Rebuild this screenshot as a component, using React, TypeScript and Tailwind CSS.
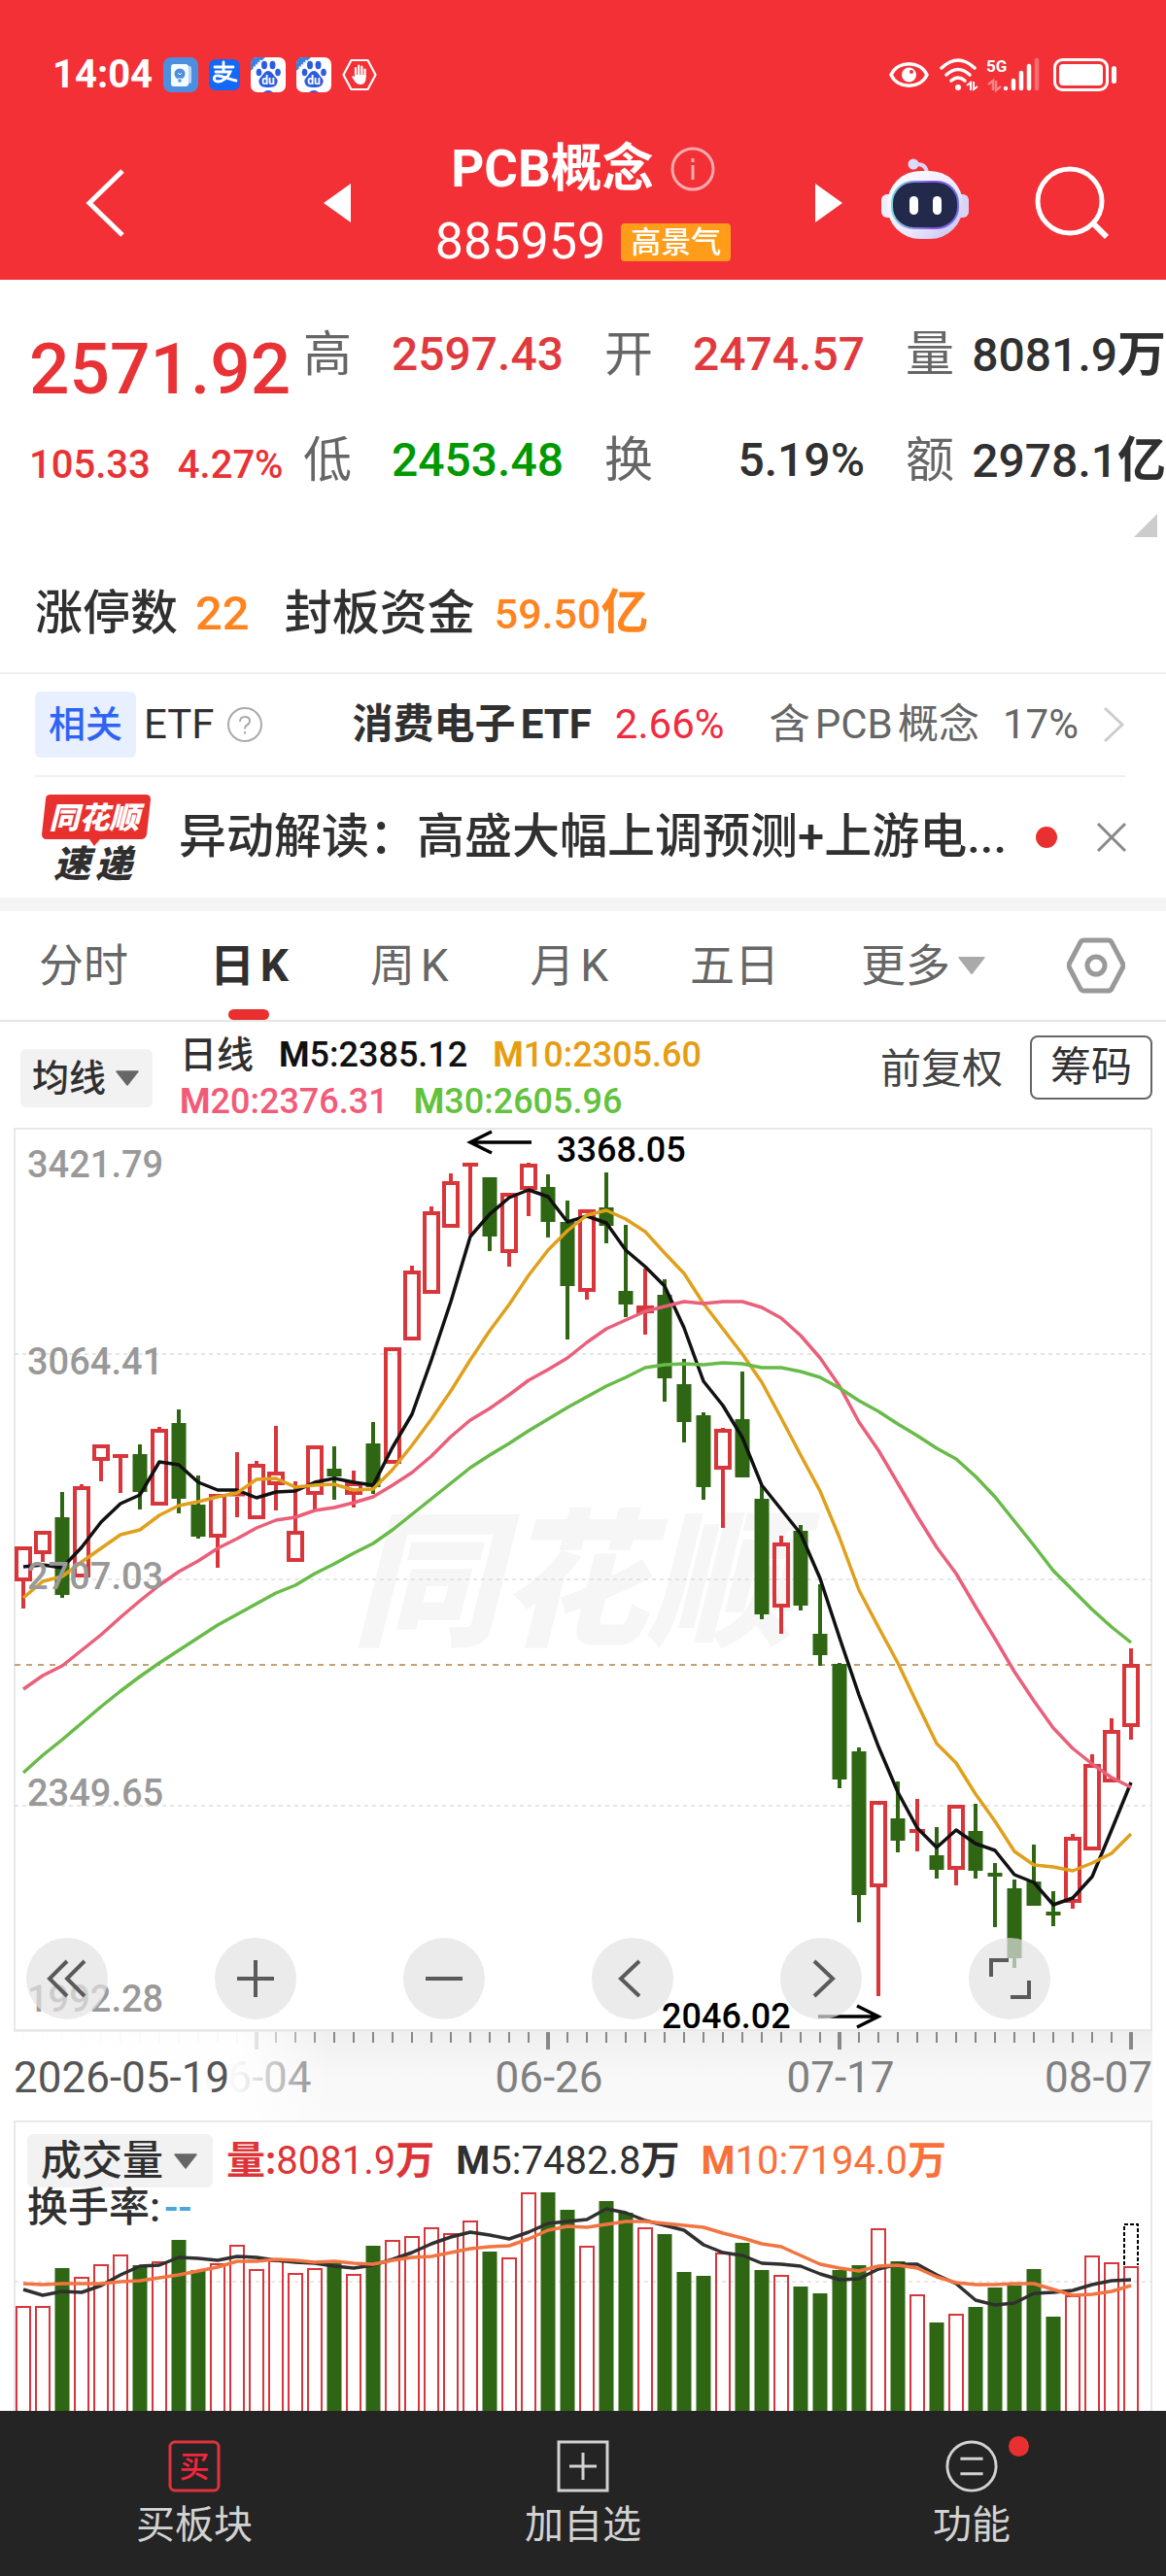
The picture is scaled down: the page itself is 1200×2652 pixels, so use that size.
import React from "react";

// [direction, high, body top, body bottom, low] in chart units
type Candle = ["r" | "g", number, number, number, number];

const candles: Candle[] = [
  ["r", 1592, 1592, 1628, 1656],
  ["r", 1576, 1576, 1600, 1608],
  ["g", 1536, 1562, 1642, 1645],
  ["r", 1528, 1530, 1624, 1624],
  ["r", 1487, 1487, 1504, 1525],
  ["r", 1497, 1497, 1501, 1537],
  ["g", 1487, 1497, 1536, 1554],
  ["r", 1469, 1471, 1550, 1550],
  ["g", 1451, 1465, 1543, 1558],
  ["g", 1519, 1549, 1582, 1584],
  ["r", 1538, 1538, 1583, 1614],
  ["r", 1495, 1536, 1541, 1562],
  ["r", 1504, 1507, 1564, 1564],
  ["r", 1468, 1515, 1529, 1555],
  ["r", 1525, 1576, 1608, 1608],
  ["r", 1488, 1488, 1539, 1554],
  ["g", 1489, 1512, 1520, 1544],
  ["r", 1514, 1526, 1539, 1552],
  ["g", 1464, 1486, 1531, 1538],
  ["r", 1387, 1387, 1507, 1507],
  ["r", 1303, 1308, 1380, 1380],
  ["r", 1242, 1247, 1332, 1332],
  ["r", 1208, 1216, 1264, 1264],
  ["r", 1197, 1197, 1201, 1271],
  ["g", 1212, 1212, 1273, 1288],
  ["r", 1228, 1228, 1290, 1304],
  ["r", 1197, 1198, 1225, 1252],
  ["g", 1209, 1222, 1258, 1274],
  ["g", 1236, 1258, 1324, 1379],
  ["r", 1245, 1245, 1330, 1338],
  ["g", 1207, 1243, 1262, 1280],
  ["g", 1261, 1329, 1343, 1356],
  ["r", 1306, 1344, 1352, 1374],
  ["g", 1317, 1333, 1419, 1443],
  ["g", 1399, 1425, 1464, 1485],
  ["g", 1454, 1457, 1531, 1544],
  ["r", 1470, 1471, 1513, 1573],
  ["g", 1412, 1461, 1521, 1521],
  ["g", 1529, 1543, 1662, 1667],
  ["r", 1581, 1588, 1655, 1682],
  ["g", 1570, 1576, 1653, 1658],
  ["g", 1631, 1682, 1704, 1715],
  ["g", 1712, 1713, 1832, 1841],
  ["g", 1799, 1803, 1951, 1979],
  ["r", 1854, 1854, 1943, 2055],
  ["g", 1834, 1872, 1895, 1907],
  ["r", 1852, 1883, 1887, 1906],
  ["g", 1881, 1910, 1925, 1934],
  ["r", 1858, 1858, 1925, 1941],
  ["g", 1857, 1885, 1926, 1934],
  ["g", 1918, 1928, 1932, 1984],
  ["g", 1935, 1944, 2016, 2026],
  ["g", 1899, 1937, 1962, 1962],
  ["g", 1947, 1968, 1972, 1983],
  ["r", 1888, 1891, 1959, 1965],
  ["r", 1806, 1816, 1905, 1905],
  ["r", 1769, 1781, 1835, 1835],
  ["r", 1697, 1713, 1778, 1791],
];

const ma5 = [
  1613, 1611, 1614, 1593, 1567, 1548, 1539, 1505, 1508, 1526, 1534, 1534, 1542, 1536, 1535, 1526, 1522, 1526, 1529, 1490,
  1456, 1400, 1340, 1273, 1250, 1233, 1225, 1232, 1258, 1252, 1259, 1287, 1304, 1324, 1367, 1422, 1447, 1480, 1529, 1554,
  1579, 1625, 1686, 1745, 1798, 1845, 1882, 1902, 1884, 1898, 1905, 1930, 1938, 1961, 1954, 1932, 1884, 1835,
];
const ma10 = [
  1645, 1628, 1623, 1608, 1594, 1580, 1575, 1560, 1550, 1546, 1541, 1537, 1523, 1522, 1531, 1529, 1528, 1534, 1533, 1513,
  1488, 1461, 1432, 1400, 1370, 1343, 1313, 1287, 1267, 1251, 1246, 1255, 1268, 1290, 1311, 1342, 1368, 1394, 1423, 1460,
  1498, 1535, 1583, 1637, 1675, 1712, 1754, 1795, 1815, 1847, 1875, 1906, 1920, 1922, 1926, 1918, 1908, 1888,
];
const ma20 = [
  1739, 1725, 1715, 1699, 1683, 1665, 1648, 1632, 1618, 1607, 1594, 1584, 1573, 1565, 1562, 1555, 1552, 1547, 1541, 1529,
  1516, 1499, 1479, 1462, 1450, 1436, 1421, 1410, 1398, 1382, 1368, 1359, 1350, 1345, 1340, 1342, 1340, 1340, 1346, 1357,
  1375, 1398, 1427, 1464, 1493, 1527, 1561, 1593, 1620, 1654, 1687, 1721, 1751, 1779, 1800, 1816, 1830, 1840,
];
const ma30 = [
  1825, 1807, 1791, 1774, 1757, 1741, 1726, 1712, 1699, 1686, 1673, 1662, 1651, 1640, 1632, 1620, 1610, 1599, 1589, 1575,
  1559, 1543, 1527, 1511, 1498, 1486, 1473, 1461, 1449, 1438, 1427, 1418, 1408, 1405, 1404, 1405, 1403, 1404, 1408, 1408,
  1412, 1418, 1429, 1442, 1453, 1466, 1478, 1491, 1502, 1520, 1541, 1566, 1591, 1617, 1637, 1657, 1675, 1691,
];

const volume = [
  2374, 2374, 2335, 2344, 2331, 2321, 2332, 2328, 2306, 2337, 2330, 2311, 2336, 2327, 2340, 2335, 2330, 2341, 2312, 2306,
  2302, 2293, 2299, 2286, 2318, 2324, 2257, 2257, 2275, 2312, 2266, 2278, 2293, 2300, 2339, 2343, 2319, 2309, 2337, 2342,
  2354, 2361, 2337, 2332, 2294, 2328, 2362, 2391, 2382, 2375, 2355, 2353, 2336, 2385, 2363, 2322, 2329, 2333,
];
const vol5 = [
  2357, 2363, 2359, 2360, 2353, 2342, 2333, 2332, 2324, 2325, 2327, 2323, 2324, 2327, 2329, 2330, 2333, 2335, 2332, 2326,
  2319, 2310, 2303, 2298, 2301, 2305, 2298, 2289, 2287, 2285, 2274, 2278, 2286, 2291, 2296, 2311, 2319, 2322, 2330, 2331,
  2333, 2341, 2347, 2346, 2336, 2331, 2331, 2342, 2351, 2368, 2373, 2371, 2361, 2360, 2358, 2352, 2348, 2347,
];
const vol10 = [
  2351, 2352, 2351, 2351, 2351, 2349, 2348, 2345, 2342, 2338, 2334, 2328, 2328, 2326, 2327, 2329, 2328, 2330, 2331, 2327,
  2324, 2323, 2319, 2315, 2313, 2312, 2305, 2296, 2292, 2293, 2290, 2287, 2287, 2289, 2291, 2293, 2299, 2304, 2310, 2313,
  2322, 2331, 2335, 2338, 2333, 2332, 2335, 2344, 2350, 2352, 2352, 2351, 2351, 2357, 2363, 2362, 2359, 2353,
];

const RED = "#d9363b";
const GREEN = "#2f6614";

const xAt = (i: number) => 24 + i * 20;
const toPoints = (ys: number[]) => ys.map((y, i) => `${xAt(i)},${y}`).join(" ");

const Triangle: React.FC<{ className: string }> = ({ className }) => (
  <svg viewBox="0 0 24 16" className={className} fill="currentColor" aria-hidden="true">
    <path d="M1 1h22L12 15z" stroke="currentColor" strokeWidth="1.5" strokeLinejoin="round" />
  </svg>
);

const BaiduIcon: React.FC = () => (
  <svg viewBox="0 0 36 36" className="size-9" aria-hidden="true">
    <rect width="36" height="36" rx="7" fill="#fff" />
    <path d="M0 14V7q0-7 7-7h8z" fill="#3b82e0" />
    <path d="M3 11l8-8" stroke="#fff" strokeWidth="2" strokeDasharray="2 1" />
    <g fill="#2c5ce0">
      <ellipse cx="14" cy="8" rx="3" ry="4.2" />
      <ellipse cx="22.5" cy="8" rx="3" ry="4.2" />
      <ellipse cx="8.5" cy="15.5" rx="2.8" ry="3.8" />
      <ellipse cx="28" cy="15.5" rx="2.8" ry="3.8" />
      <path d="M18 14c4 0 5 4 8 7 2 2 2 4 1 6-1 3-4 4-9 4s-8-1-9-4c-1-2-1-4 1-6 3-3 4-7 8-7z" />
      <path d="M13 36q5-4 10 0z" />
    </g>
    <text x="18" y="28" textAnchor="middle" fontSize="12" fontWeight="700" fill="#fff">
      du
    </text>
  </svg>
);

const StatusBar: React.FC = () => (
  <div className="flex items-center justify-between pl-[54px] pr-[50px] text-white">
    <div className="flex items-center gap-[11px]">
      <span className="text-[40px] leading-[40px] font-bold">14:04</span>
      <svg viewBox="0 0 36 36" className="size-9" aria-hidden="true">
        <rect width="36" height="36" rx="8" fill="#4c8fe0" />
        <rect x="25" y="9" width="4" height="18" rx="2" fill="#b9d6f7" />
        <rect x="8" y="7" width="18" height="23" rx="3" fill="#f5faff" />
        <circle cx="17" cy="17" r="5.5" fill="#4c8fe0" />
        <path d="M15 22h4v4h-4zM15 16l2 2 2-2" fill="#4c8fe0" stroke="#f5faff" />
      </svg>
      <svg viewBox="0 0 32 32" className="size-8" aria-hidden="true">
        <rect width="32" height="32" rx="7" fill="#1368f5" />
        <path
          d="M6 8h19M15 3v9M7 13h15c-2 5-7 10-13 10-6-1-4-7 1-6 6 1 12 4 18 5"
          fill="none"
          stroke="#fff"
          strokeWidth="2.8"
          strokeLinecap="round"
        />
      </svg>
      <BaiduIcon />
      <BaiduIcon />
      <svg viewBox="0 0 36 36" className="size-9" fill="none" stroke="#fff" aria-hidden="true">
        <path d="M9.5 3h17L34.5 18l-8 15h-17L1.5 18z" strokeWidth="2.2" strokeLinejoin="round" />
        <path d="M14 20v-9M17.2 19V8.5M20.4 19V9.5M23.6 20v-7.5" strokeWidth="2.2" strokeLinecap="round" />
        <path d="M13 18h11.5v4c0 4-3 6-5.5 6-4 0-6-3-9-8 1.5-1.5 2.5-.5 3 .5z" fill="#fff" stroke="none" />
      </svg>
    </div>
    <div className="flex items-center">
      <svg viewBox="0 0 41 28" className="h-7 w-[41px]" aria-hidden="true">
        <path d="M2 14C9-1 32-1 39 14 32 29 9 29 2 14z" fill="none" stroke="#fff" strokeWidth="3.5" />
        <circle cx="20.5" cy="14" r="7.5" fill="#fff" />
        <circle cx="23" cy="11" r="2" fill="#f23036" />
      </svg>
      <svg viewBox="0 0 40 34" className="ml-[11px] h-[34px] w-10" aria-hidden="true">
        <g fill="none" stroke="#fff" strokeWidth="3.5" strokeLinecap="round">
          <path d="M2 10q17-16 34 0" />
          <path d="M7 17q12-11 24 0" />
          <path d="M12 23q7-6 14 0" />
        </g>
        <circle cx="19" cy="30" r="3" fill="#fff" />
        <path d="M28 28l4-3v8M39 29l-4 3v-8" fill="none" stroke="#fff" strokeWidth="2" />
      </svg>
      <svg viewBox="0 0 56 36" className="ml-2 h-9 w-14" aria-hidden="true">
        <text x="0" y="15" fontSize="17" fontWeight="700" fill="#fff">
          5G
        </text>
        <path d="M2 28l5-4v10M15 30l-5 4V24" fill="none" stroke="#fff" strokeOpacity=".4" strokeWidth="2.5" />
        <g stroke="#fff" strokeWidth="4.5" strokeLinecap="round">
          <path d="M20 32v.1M28 24v8M36 16v16M44 9v23" />
          <path d="M52 3v29" strokeOpacity=".3" />
        </g>
      </svg>
      <svg viewBox="0 0 66 34" className="ml-[13px] h-[34px] w-[66px]" aria-hidden="true">
        <rect x="1.5" y="1.5" width="54" height="31" rx="8" fill="none" stroke="#fff" strokeWidth="3" />
        <rect x="6" y="6" width="45" height="22" rx="4" fill="#fff" />
        <rect x="60" y="8" width="5" height="18" rx="2.5" fill="#fff" />
      </svg>
    </div>
  </div>
);

const Header: React.FC = () => (
  <header className="bg-[#f23036] pt-[57px] pb-[14px] text-white">
    <StatusBar />
    <div className="mt-[47px] grid grid-cols-[1fr_478px_1fr] items-center">
      <div className="flex items-center justify-between pl-[88px]">
        <button type="button" aria-label="返回">
          <svg viewBox="0 0 40 70" className="h-[70px] w-10" fill="none" stroke="#fff" strokeWidth="5">
            <path d="M38 2L4 35l34 33" />
          </svg>
        </button>
        <button type="button" aria-label="上一个">
          <svg viewBox="0 0 28 40" className="h-10 w-7" fill="#fff">
            <path d="M28 0v40L0 20z" />
          </svg>
        </button>
      </div>
      <div className="flex flex-col items-center gap-5">
        <div className="flex items-center gap-[17px]">
          <h1 className="text-[53px] leading-[60px] font-bold">PCB概念</h1>
          <svg viewBox="0 0 46 46" className="size-[46px] opacity-60" fill="none" stroke="#fff" strokeWidth="3">
            <circle cx="23" cy="23" r="21" />
            <path d="M23 19v15M23 12v4" />
          </svg>
        </div>
        <div className="flex items-center gap-4">
          <span className="text-[52px] leading-[50px]">885959</span>
          <span className="rounded-sm bg-[#ff9c1a] px-[10px] text-[31px] leading-[39px] font-medium">高景气</span>
        </div>
      </div>
      <div className="flex items-center">
        <button type="button" aria-label="下一个">
          <svg viewBox="0 0 28 40" className="h-10 w-7" fill="#fff">
            <path d="M0 0v40l28-20z" />
          </svg>
        </button>
        <button type="button" aria-label="智能助手" className="ml-10 -mt-2">
          <svg viewBox="0 0 90 84" className="h-[84px] w-[90px]">
            <defs>
              <linearGradient id="shell" x1="0" y1="0" x2="1" y2="1">
                <stop offset="0" stopColor="#fff" />
                <stop offset=".6" stopColor="#ece8ff" />
                <stop offset="1" stopColor="#bdbcf2" />
              </linearGradient>
              <linearGradient id="visorRim" x1="0" y1="0" x2="1" y2="0">
                <stop offset="0" stopColor="#7fd6e0" />
                <stop offset=".6" stopColor="#8a4fe0" />
                <stop offset="1" stopColor="#6a6cf0" />
              </linearGradient>
            </defs>
            <circle cx="33" cy="6" r="5.5" fill="#dcdcfa" />
            <path d="M35 6q11-1 12 9" fill="none" stroke="#dcd4f2" strokeWidth="4" />
            <rect x="0" y="37" width="14" height="24" rx="6" fill="#f0eefc" />
            <rect x="76" y="37" width="14" height="24" rx="6" fill="#d8d4f6" />
            <rect x="6" y="13" width="78" height="70" rx="34" fill="url(#shell)" />
            <rect x="11" y="24" width="68" height="48" rx="22" fill="#22294a" stroke="url(#visorRim)" strokeWidth="2" />
            <rect x="29" y="39" width="9" height="19" rx="4.5" fill="#fff" />
            <rect x="53" y="39" width="9" height="19" rx="4.5" fill="#fff" />
          </svg>
        </button>
        <button type="button" aria-label="搜索" className="ml-[68px]">
          <svg viewBox="0 0 76 76" className="size-[76px]" fill="none" stroke="#fff" strokeWidth="5">
            <circle cx="36" cy="36" r="33" />
            <path d="M60 59l14 14" strokeWidth="6" />
          </svg>
        </button>
      </div>
    </div>
  </header>
);

const quotes = [
  { label: "高", value: "2597.43", unit: "", color: "text-[#e03a3e]" },
  { label: "开", value: "2474.57", unit: "", color: "text-[#e03a3e]" },
  { label: "量", value: "8081.9", unit: "万", color: "text-[#303030]" },
  { label: "低", value: "2453.48", unit: "", color: "text-[#009900]" },
  { label: "换", value: "5.19%", unit: "", color: "text-[#303030]" },
  { label: "额", value: "2978.1", unit: "亿", color: "text-[#303030]" },
];

const QuotePanel: React.FC = () => (
  <section className="border-b-2 border-[#eeeeee] pt-[47px] pb-[30px]">
    <div className="flex items-start">
      <div className="w-[312px] shrink-0 pl-[30px] text-[#e83236]">
        <div className="text-[73px] leading-[90px] font-medium">2571.92</div>
        <div className="mt-6 flex gap-[28px] text-[40px] leading-[60px] font-medium">
          <span>105.33</span>
          <span>4.27%</span>
        </div>
      </div>
      <dl className="grid flex-1 grid-cols-3 gap-x-[42px] gap-y-[48px] text-[48px] leading-[60px]">
        {quotes.map((q) => (
          <div key={q.label} className="flex justify-between">
            <dt className="text-[50px] text-[#666666]">{q.label}</dt>
            <dd className={`font-medium ${q.color}`}>
              {q.value}
              {q.unit && <b className="text-[50px] font-bold">{q.unit}</b>}
            </dd>
          </div>
        ))}
      </dl>
    </div>
    <div className="mt-[20px] flex justify-end pr-[9px]">
      <svg viewBox="0 0 24 24" className="size-6" fill="#cccccc" aria-hidden="true">
        <path d="M24 0v24H0z" />
      </svg>
    </div>
    <div className="mt-[48px] flex items-center pl-9 text-[49px] leading-[60px] font-medium text-[#303030]">
      <span>涨停数</span>
      <span className="ml-[18px] text-[#ff8420]">22</span>
      <span className="ml-9">封板资金</span>
      <span className="ml-5 text-[43px] text-[#ff8420]">
        59.50<b className="text-[49px]">亿</b>
      </span>
    </div>
  </section>
);

const EtfRow: React.FC = () => (
  <a href="#etf" className="mr-[42px] ml-9 flex items-center border-b-2 border-[#f0f0f0] py-[18px] text-[42px] leading-[68px] [text-autospace:normal]">
    <span className="rounded-md bg-[#e8effe] px-[14px] text-[38px] font-medium text-[#2f63f5]">相关</span>
    <span className="ml-2 text-[#303030]">ETF</span>
    <svg viewBox="0 0 38 38" className="ml-3 size-[38px]" fill="none" stroke="#aaaaaa" strokeWidth="2" aria-hidden="true">
      <circle cx="19" cy="19" r="17" />
      <path d="M14 16q0-5 5-5t5 4q0 3-3 4.5-2 1-2 4M19 26v2.5" />
    </svg>
    <span className="ml-auto font-bold text-[#303030]">消费电子ETF</span>
    <span className="ml-6 text-[#f02b3f]">2.66%</span>
    <span className="ml-[46px] text-[#666666]">含PCB概念</span>
    <span className="ml-6 text-[#666666]">17%</span>
    <svg viewBox="0 0 24 38" className="ml-6 h-[38px] w-6" fill="none" stroke="#cccccc" strokeWidth="3" aria-hidden="true">
      <path d="M3 2l18 17L3 36" />
    </svg>
  </a>
);

const NewsRow: React.FC = () => (
  <div className="flex items-center border-b-[14px] border-[#f4f4f4] py-[11px] pr-[40px] pl-[42px]">
    <svg viewBox="0 -6 114 102" className="h-[102px] w-[114px] shrink-0" role="img" aria-label="同花顺速递">
      <path d="M10 1h98q5 0 5 5l-4 36q-1 5-6 5H61l-6 7-5-7H6q-5 0-5-5L5 6q0-5 5-5z" fill="#e8302f" />
      <text x="55" y="36" textAnchor="middle" fontSize="31" fontWeight="900" fontStyle="italic" fill="#fff">
        同花顺
      </text>
      <text x="13" y="86" fontSize="38" fontWeight="900" fontStyle="italic" fill="#303030">
        速
      </text>
      <text x="56" y="86" fontSize="38" fontWeight="900" fontStyle="italic" fill="#303030">
        递
      </text>
    </svg>
    <a href="#news" className="ml-7 min-w-0 flex-1 truncate text-[49px] leading-[60px] font-medium text-[#303030]">
      异动解读：高盛大幅上调预测+上游电...
    </a>
    <span className="ml-6 size-[22px] shrink-0 rounded-full bg-[#e83030]" />
    <button type="button" aria-label="关闭" className="ml-10 shrink-0">
      <svg viewBox="0 0 32 32" className="size-8" fill="none" stroke="#888888" strokeWidth="3">
        <path d="M2 2l28 28M30 2L2 30" />
      </svg>
    </button>
  </div>
);

const tabs = ["分时", "日K", "周K", "月K", "五日"];

const PeriodTabs: React.FC = () => (
  <nav className="flex items-start justify-between border-b-2 border-[#e6e6e6] pr-[42px] pl-10 pt-[26px] text-[46px] leading-[60px] text-[#666666] [text-autospace:normal]">
    {tabs.map((t) =>
      t === "日K" ? (
        <button key={t} type="button" className="flex flex-col items-center gap-[15px] font-bold text-[#303030]">
          {t}
          <span className="h-[11px] w-[42px] rounded-full bg-[#e83030]" />
        </button>
      ) : (
        <button key={t} type="button">
          {t}
        </button>
      )
    )}
    <button type="button" aria-haspopup="menu" className="flex items-center gap-2">
      更多
      <Triangle className="h-6 w-7 text-[#aaaaaa]" />
    </button>
    <button type="button" aria-label="设置" className="flex h-[60px] items-center">
      <svg viewBox="0 0 60 58" className="h-[58px] w-[60px]" fill="none" stroke="#999999" strokeWidth="5">
        <path d="M18 3h24q3 0 4 2l11 21q2 3 0 6L46 53q-1 2-4 2H18q-3 0-4-2L3 32q-2-3 0-6L14 5q1-2 4-2z" />
        <circle cx="30" cy="29" r="9" />
      </svg>
    </button>
  </nav>
);

const IndicatorBar: React.FC = () => (
  <div className="flex items-center justify-between pt-[10px] pr-[14px] pl-[21px]">
    <div className="flex items-center">
      <div className="grid w-[136px] items-center rounded-md bg-[#f2f2f2]">
        <select
          aria-label="指标"
          className="w-full appearance-none bg-transparent pl-3 text-[38px] leading-[60px] font-medium text-[#303030] [grid-area:1/1]"
        >
          <option>均线</option>
        </select>
        <Triangle className="pointer-events-none mr-[14px] h-4 w-6 justify-self-end text-[#666666] [grid-area:1/1]" />
      </div>
      <div className="ml-7 text-[36px] leading-[48px] font-medium">
        <div className="flex gap-[26px]">
          <span className="text-[38px] text-[#303030]">日线</span>
          <span className="text-[#111111]"><b>M</b>5:2385.12</span>
          <span className="text-[#e69d12]"><b>M</b>10:2305.60</span>
        </div>
        <div className="flex gap-[26px]">
          <span className="text-[#f25b78]"><b>M</b>20:2376.31</span>
          <span className="text-[#62c23e]"><b>M</b>30:2605.96</span>
        </div>
      </div>
    </div>
    <div className="flex items-center gap-7 self-start text-[42px]">
      <button type="button" className="pt-2 leading-[60px] text-[#444444]">前复权</button>
      <button type="button" className="mt-1 w-[126px] rounded-lg border-2 border-[#666666] leading-[62px] text-[#303030]">
        筹码
      </button>
    </div>
  </div>
);

const axisPrices = [
  { y: 1212, text: "3421.79" },
  { y: 1415, text: "3064.41" },
  { y: 1636, text: "2707.03" },
  { y: 1859, text: "2349.65" },
  { y: 2071, text: "1992.28" },
];

const controls = [
  { label: "最左", d: "M42 24L24 42l18 18M60 24L42 42l18 18" },
  { label: "放大", d: "M42 23v38M23 42h38" },
  { label: "缩小", d: "M23 42h38" },
  { label: "左移", d: "M49 24L30 42l19 18" },
  { label: "右移", d: "M35 24l19 18-19 18" },
  { label: "全屏", d: "M41 23H23v17M43 61h19V44" },
];

const KLineChart: React.FC = () => (
  <div className="grid">
    <svg viewBox="0 1158 1200 1025" className="w-full [grid-area:1/1]" role="img" aria-label="日K线">
      <defs>
        <linearGradient id="axisBg" x1="0" y1="0" x2="0" y2="1">
          <stop offset="0" stopColor="#efefef" />
          <stop offset=".5" stopColor="#f8f8f8" />
          <stop offset="1" stopColor="#fafafa" />
        </linearGradient>
        <linearGradient id="axisFade" x1="0" y1="0" x2="1" y2="0">
          <stop offset="0" stopColor="#fff" />
          <stop offset=".72" stopColor="#fff" stopOpacity=".94" />
          <stop offset="1" stopColor="#fff" stopOpacity="0" />
        </linearGradient>
      </defs>
      <text x="362" y="1682" fontSize="152" fontWeight="900" fontStyle="italic" fill="#f6f6f6">
        同花顺
      </text>
      <rect x="15" y="1162" width="1170" height="928" fill="none" stroke="#e8e8e8" strokeWidth="2" />
      <g stroke="#dedede" strokeWidth="1.5" strokeDasharray="4 4">
        <path d="M15 1394H1185M15 1626H1185M15 1859H1185" />
      </g>
      <path d="M15 1714H1185" stroke="#c2a273" strokeWidth="2" strokeDasharray="6 6" />

      {candles.map(([dir, high, top, bottom, low], i) => {
        const x = xAt(i);
        if (dir === "g") {
          return (
            <g key={i} fill={GREEN}>
              <rect x={x - 2} y={high} width="4" height={low - high} />
              <rect x={x - 7.5} y={top} width="15" height={bottom - top} />
            </g>
          );
        }
        return (
          <g key={i} stroke={RED} strokeWidth="4" fill="none">
            {high < top && <path d={`M${x} ${high}V${top}`} />}
            {bottom - top > 6 ? (
              <rect x={x - 7} y={top + 2} width="14" height={bottom - top - 4} />
            ) : (
              <path d={`M${x - 8} ${(top + bottom) / 2}h16`} />
            )}
            {low > bottom && <path d={`M${x} ${bottom}V${low}`} />}
          </g>
        );
      })}

      <g fill="none" strokeWidth="3.5" strokeLinejoin="round">
        <polyline points={toPoints(ma5)} stroke="#111111" />
        <polyline points={toPoints(ma10)} stroke="#e0a01c" />
        <polyline points={toPoints(ma20)} stroke="#ea5f7a" />
        <polyline points={toPoints(ma30)} stroke="#68bb48" />
      </g>

      <g fontSize="38" fontWeight="500" fill="#999999">
        {axisPrices.map((p) => (
          <text key={p.text} x="28" y={p.y}>
            {p.text}
          </text>
        ))}
      </g>

      <g fill="none" stroke="#000" strokeWidth="3.5">
        <path d="M547 1176H486M506 1165l-22 11 22 11" />
        <path d="M842 2076H902M882 2065l22 11-22 11" />
      </g>
      <text x="573" y="1196" fontSize="36" fontWeight="500">
        3368.05
      </text>

      <rect x="14" y="2091" width="1172" height="92" fill="url(#axisBg)" />
      {candles.map((_, i) => {
        const major = i % 15 === 12;
        const last = i === candles.length - 1;
        return (
          <rect
            key={i}
            x={xAt(i) - (major || last ? 2 : 1)}
            y="2092"
            width={major || last ? 4 : 2}
            height={major || last ? 18 : 11}
            fill="#888888"
          />
        );
      })}
      <g fontSize="44" fill="#808080">
        <text x="265" y="2154" textAnchor="middle">06-04</text>
        <text x="565" y="2154" textAnchor="middle">06-26</text>
        <text x="865" y="2154" textAnchor="middle">07-17</text>
        <text x="1186" y="2154" textAnchor="end">08-07</text>
      </g>
      <rect x="0" y="2092" width="340" height="91" fill="url(#axisFade)" />
      <text x="14" y="2154" fontSize="44" fill="#555555">
        2026-05-19
      </text>
    </svg>

    <div className="flex justify-between self-end pr-[119px] pb-[104px] pl-[27px] [grid-area:1/1]">
      {controls.map((c) => (
        <button key={c.label} type="button" aria-label={c.label} className="rounded-full bg-[#e3e3e3]/70">
          <svg viewBox="0 0 84 84" className="size-[84px]" fill="none" stroke="#5a5a5a" strokeWidth="4">
            <path d={c.d} />
          </svg>
        </button>
      ))}
    </div>

    <svg viewBox="0 1158 1200 1025" className="pointer-events-none w-full [grid-area:1/1]">
      <text x="681" y="2088" fontSize="36" fontWeight="500">
        2046.02
      </text>
    </svg>
  </div>
);

const VolumeChart: React.FC = () => (
  <div className="grid">
    <svg viewBox="0 2183 1200 299" className="w-full [grid-area:1/1]" role="img" aria-label="成交量">
      <path d="M15 2482V2184H1185V2482" fill="none" stroke="#e8e8e8" strokeWidth="2" />
      <path d="M15 2349H1185" stroke="#f0dcdc" strokeWidth="1.5" strokeDasharray="4 4" />
      {volume.map((top, i) =>
        candles[i][0] === "g" ? (
          <rect key={i} x={xAt(i) - 7.5} y={top} width="15" height={2482 - top} fill={GREEN} />
        ) : (
          <path
            key={i}
            d={`M${xAt(i) - 7} 2482V${top + 1}h14V2482`}
            fill="none"
            stroke={RED}
            strokeWidth="2"
          />
        )
      )}
      <path d="M1157 2332v-42h14v42" fill="none" stroke="#000" strokeWidth="2" strokeDasharray="4 2" />
      <g fill="none" strokeWidth="3.5" strokeLinejoin="round">
        <polyline points={toPoints(vol5)} stroke="#303030" />
        <polyline points={toPoints(vol10)} stroke="#f27440" />
      </g>
    </svg>
    <div className="self-start pt-[14px] pl-[28px] text-[40px] leading-[42px] [grid-area:1/1]">
      <div className="flex items-center">
        <div className="grid w-[191px] items-center rounded-md bg-[#f2f2f2]">
          <select
            aria-label="副图指标"
            className="w-full appearance-none bg-transparent pl-[14px] text-[42px] leading-[55px] font-medium text-[#303030] [grid-area:1/1]"
          >
            <option>成交量</option>
          </select>
          <Triangle className="pointer-events-none mr-4 h-4 w-6 justify-self-end text-[#666666] [grid-area:1/1]" />
        </div>
        <span className="ml-[14px] text-[#dd3438]">
          <b>量:</b>8081.9<b>万</b>
        </span>
        <span className="ml-[22px] text-[#303030]">
          <b>M</b>5:7482.8<b>万</b>
        </span>
        <span className="ml-[22px] text-[#f9703a]">
          <b>M</b>10:7194.0<b>万</b>
        </span>
      </div>
      <div className="flex items-center text-[42px] font-medium text-[#303030]">
        换手率:
        <span className="ml-1 text-[#4aa5d8]">--</span>
      </div>
    </div>
  </div>
);

const BottomBar: React.FC = () => (
  <footer className="grid grid-cols-3 bg-[#242424] pt-[30px] pb-[27px] text-[40px] leading-[50px] text-[#d2d2d2]">
    <button type="button" className="flex flex-col items-center gap-[9px]">
      <svg viewBox="0 0 54 54" className="size-[54px]" aria-hidden="true">
        <rect x="2" y="2" width="50" height="50" rx="5" fill="none" stroke="#e0333c" strokeWidth="3" />
        <text x="27" y="38" textAnchor="middle" fontSize="31" fontWeight="500" fill="#f5253c">
          买
        </text>
      </svg>
      买板块
    </button>
    <button type="button" className="flex flex-col items-center gap-[9px]">
      <svg viewBox="0 0 54 54" className="size-[54px]" fill="none" stroke="#d2d2d2" strokeWidth="3" aria-hidden="true">
        <path d="M2 2h50v50H2zM27 13v28M13 27h28" />
      </svg>
      加自选
    </button>
    <button type="button" className="flex flex-col items-center gap-[9px]">
      <span className="relative">
        <svg viewBox="0 0 56 56" className="size-[54px]" fill="none" stroke="#d2d2d2" strokeWidth="3" aria-hidden="true">
          <circle cx="28" cy="28" r="26" />
          <path d="M16 20h24M16 36h24" />
        </svg>
        <span className="absolute -top-1 -right-8 size-[21px] rounded-full bg-[#e83030]" />
      </span>
      功能
    </button>
  </footer>
);

const App: React.FC = () => {
  return (
    <div className="w-full overflow-hidden bg-white font-['Roboto','Noto_Sans_CJK_SC',sans-serif]">
      <Header />
      <main>
        <QuotePanel />
        <EtfRow />
        <NewsRow />
        <PeriodTabs />
        <IndicatorBar />
        <KLineChart />
        <VolumeChart />
      </main>
      <BottomBar />
    </div>
  );
};

export default App;
